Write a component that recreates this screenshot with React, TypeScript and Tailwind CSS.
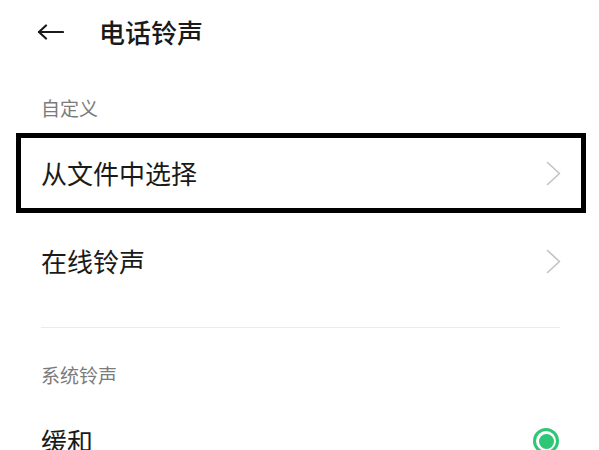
const cjk = { fontFamily: '"Noto Sans CJK SC", "Noto Sans", sans-serif' };

function Chevron() {
  return (
    <svg width="15" height="25" viewBox="0 0 15 25" fill="none" className="flex-shrink-0">
      <polyline points="1.5,1.5 13.5,12.5 1.5,23.5" stroke="#c2c2c2" strokeWidth="1.6" strokeLinejoin="round" strokeLinecap="round" />
    </svg>
  );
}

function BackArrow() {
  return (
    <svg width="27" height="16" viewBox="0 0 27 16" fill="none">
      <line x1="2" y1="8" x2="26" y2="8" stroke="#1a1a1a" strokeWidth="2.2" strokeLinecap="round" />
      <polyline points="9,1.5 2,8 9,14.5" stroke="#1a1a1a" strokeWidth="2.2" strokeLinecap="round" strokeLinejoin="round" />
    </svg>
  );
}

function Radio() {
  return (
    <div className="w-[26px] h-[26px] rounded-full border-[3px] border-[#2dc776] flex items-center justify-center flex-shrink-0">
      <div className="w-[15px] h-[15px] rounded-full bg-[#2dc776]" />
    </div>
  );
}

export default function App() {
  return (
    <div className="w-[599px] h-[450px] overflow-hidden bg-white" style={cjk}>
      <header className="h-[64px] flex items-center pl-[37px]">
        <BackArrow />
        <h1 className="ml-[35px] text-[26px] leading-none font-medium text-[#1a1a1a]">电话铃声</h1>
      </header>

      <div className="pt-[32px] pb-[13px] px-[41px] h-[69px]">
        <p className="text-[19px] leading-[24px] text-[#7b7b7b]">自定义</p>
      </div>

      <div className="mx-[16px] w-[570px] h-[80px] border-[5px] border-black flex items-center justify-between pl-[20px] pr-[20px]">
        <span className="text-[26px] leading-none text-[#1a1a1a]">从文件中选择</span>
        <Chevron />
      </div>

      <div className="h-[96px] flex items-center justify-between pl-[41px] pr-[38px]">
        <span className="text-[26px] leading-none text-[#1a1a1a]">在线铃声</span>
        <Chevron />
      </div>

      <div className="mt-[18px] ml-[41px] mr-[39px] h-px bg-[#ebebeb]" />

      <div className="pt-[35px] px-[41px] h-[59px]">
        <p className="text-[19px] leading-[24px] text-[#7b7b7b]">系统铃声</p>
      </div>

      <div className="h-[108px] flex items-center justify-between pl-[41px] pr-[40px]">
        <span className="text-[26px] leading-none text-[#1a1a1a]">缓和</span>
        <Radio />
      </div>
    </div>
  );
}
